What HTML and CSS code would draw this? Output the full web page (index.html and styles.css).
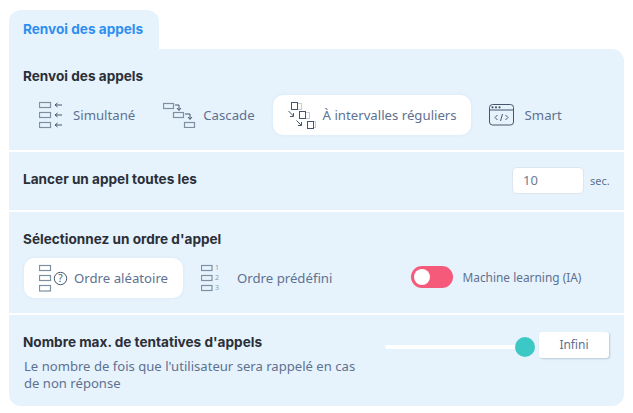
FILE: index.html
```html
<!DOCTYPE html>
<html lang="fr">
<head>
<meta charset="utf-8">
<title>Renvoi des appels</title>
<link rel="stylesheet" href="styles.css">
</head>
<body>
<div class="tab">Renvoi des appels</div>
<main class="panel">
  <section class="sec sec-mode">
    <h2 class="title">Renvoi des appels</h2>
    <div class="opts">
      <div class="opt opt-sim">
        <svg class="ic" width="23" height="28" viewBox="0 0 23 28">
          <g class="box"><rect x=".5" y="1.5" width="11" height="5"/><rect x=".5" y="11.5" width="11" height="5"/><rect x=".5" y="21.5" width="11" height="5"/></g>
          <g class="ln"><path d="M16 4h7M18.5 2 16 4l2.5 2M16 14h7M18.5 12 16 14l2.5 2M16 24h7M18.5 22 16 24l2.5 2"/></g>
        </svg>
        <span>Simultané</span>
      </div>
      <div class="opt opt-cas">
        <svg class="ic" width="33" height="26" viewBox="0 0 33 26">
          <g class="box"><rect x=".5" y="1.5" width="10" height="5"/><rect x="10.5" y="10.5" width="10" height="5"/><rect x="21.5" y="20.5" width="10" height="5"/></g>
          <g class="ln"><path d="M12 3h4v5M14 6l2 2.5L18 6M22 12h5v5M25 15l2 2.5 2-2.5"/></g>
        </svg>
        <span>Cascade</span>
      </div>
      <div class="opt opt-int on">
        <svg class="ic" width="28" height="29" viewBox="0 0 28 29">
          <g class="dot"><rect x="9.500" y="2.500" width="4" height="6"/><rect x="17.500" y="11.500" width="4" height="6"/><rect x="25.500" y="20.500" width="2" height="6"/></g>
          <g class="ln"><rect x="3.500" y="1.500" width="6" height="7"/><rect x="11.500" y="10.500" width="6" height="7"/><rect x="19.500" y="20.500" width="6" height="7"/><path d="M.5 10l5 5M2 15.500h3.500V12M8.500 19.500l5 5M10 24.500h3.500V21"/></g>
        </svg>
        <span class="nowrap">À intervalles réguliers</span>
      </div>
      <div class="opt opt-sma">
        <svg class="ic" width="25" height="22" viewBox="0 0 25 22">
          <rect class="ln" x=".5" y=".5" width="24" height="20.500" rx="3"/>
          <path class="ln" d="M.5 6h24"/>
          <g class="fill"><circle cx="3.500" cy="3.300" r="1.100"/><circle cx="7" cy="3.300" r="1.100"/><circle cx="10.500" cy="3.300" r="1.100"/></g>
          <path class="ln" d="M8.500 11l-2.500 2.500 2.500 2.500M16.500 11l2.500 2.500-2.500 2.500M13.500 10l-2 7"/>
        </svg>
        <span>Smart</span>
      </div>
    </div>
  </section>
  <section class="sec sec-delay">
    <h2 class="title">Lancer un appel toutes les</h2>
    <div class="delay">
      <div class="input">10</div>
      <span class="unit">sec.</span>
    </div>
  </section>
  <section class="sec sec-order">
    <h2 class="title">Sélectionnez un ordre d'appel</h2>
    <div class="order-row">
      <div class="opt opt-rand on">
        <svg class="ic" width="29" height="28" viewBox="0 0 29 28">
          <g class="box"><rect x=".5" y="1.500" width="11" height="5"/><rect x=".5" y="11.500" width="11" height="5"/><rect x=".5" y="21.500" width="11" height="5.500"/></g>
          <circle class="ln" cx="21.500" cy="14.500" r="6.200"/>
          <text class="q" x="21.500" y="18">?</text>
        </svg>
        <span>Ordre aléatoire</span>
      </div>
      <div class="opt opt-pre">
        <svg class="ic" width="19" height="28" viewBox="0 0 19 28">
          <g class="box"><rect x=".5" y="1.500" width="10.500" height="5"/><rect x=".5" y="11.500" width="10.500" height="5"/><rect x=".5" y="21.500" width="10.500" height="5"/></g>
          <g class="num"><text x="14" y="6">1</text><text x="14" y="16">2</text><text x="14" y="26">3</text></g>
        </svg>
        <span>Ordre prédéfini</span>
      </div>
      <div class="ml">
        <div class="toggle"><i class="knob"></i></div>
        <span class="ml-label">Machine learning (IA)</span>
      </div>
    </div>
  </section>
  <section class="sec sec-max">
    <div class="max-text">
      <h2 class="title">Nombre max. de tentatives d'appels</h2>
      <p class="desc">Le nombre de fois que l'utilisateur sera rappelé en cas de non réponse</p>
    </div>
    <div class="max-ctl">
      <div class="slider"><i class="thumb"></i></div>
      <div class="infini">Infini</div>
    </div>
  </section>
</main>
</body>
</html>
```
FILE: styles.css
```css
* { box-sizing: border-box; }
html, body { margin: 0; padding: 0; background: #fff; }
body {
  width: 633px; height: 413px; padding: 10px 9px 0;
  overflow: hidden;
  font-family: "Noto Sans", sans-serif; color: #5e7190; font-size: 13.200px;
}
.nowrap { white-space: nowrap; }
.tab {
  width: 150px; height: 39px; padding: 11px 0 0 14px;
  background: #e6f3fd; border-radius: 12px 12px 0 0;
  font-family: "Inter", sans-serif; font-weight: 700; font-size: 13.600px; line-height: 17px;
  color: #2f8ff0;
}
.panel { width: 615px; border-radius: 0 12px 12px 12px; overflow: hidden; display: flex; flex-direction: column; gap: 2px; }
.sec { background: #e6f3fd; padding: 0 15px; }
.title {
  margin: 0; margin-left: -1px; font-family: "Inter", sans-serif; font-weight: 700; font-size: 13.600px; line-height: 17px;
  color: #2b2f38;
}
.sec-mode { height: 101px; padding-top: 19px; }
.opts { display: flex; margin-top: 10px; height: 40px; }
.opt { display: flex; align-items: center; height: 40px; border-radius: 10px; }
.opt.on { background: #fff; box-shadow: 0 0 3px rgba(160,190,220,.25); }
.ic { flex: none; display: block; }
.box rect { fill: none; stroke: #7f8f9f; stroke-width: 1.200; }
.ln, .ln rect, .ln path { fill: none; stroke: #46556a; stroke-width: 1; }
.dot rect { fill: none; stroke: #8f9ba8; stroke-width: 1; stroke-dasharray: 1 1; }
.fill circle { fill: #46556a; }
.q { font-family: "Noto Sans", sans-serif; font-size: 10px; text-anchor: middle; fill: #46556a; }
.num text { font-family: "Noto Sans", sans-serif; font-size: 7px; fill: #8b9aa9; }
.opt-sim { margin-left: 15px; gap: 11px; }
.opt-cas { margin-left: 28px; gap: 7px; }
.opt-int { margin-left: 18px; padding: 0 15px; gap: 7px; width: 198px; }
.opt-sma { margin-left: 18px; gap: 11px; }
.sec-delay { height: 58px; display: flex; justify-content: space-between; padding-top: 15px; }
.sec-delay .title { margin-top: 4px; }
.delay { display: flex; align-items: center; height: 27px; gap: 6px; }
.input {
  width: 72px; height: 27px; padding: 0 10px; line-height: 25px;
  background: #fff; border: 1px solid #dde6ee; border-radius: 5px; color: #6b7c93; font-size: 13px;
}
.unit { font-size: 11px; width: 19px; white-space: nowrap; }
.sec-order { height: 101px; padding-top: 19px; }
.order-row { display: flex; margin-top: 10px; align-items: center; }
.opt-rand { width: 159px; padding-left: 15px; gap: 6px; }
.opt-pre { margin-left: 18px; gap: 17px; }
.ml { display: flex; align-items: center; margin-left: 79px; gap: 9px; margin-top: -2px; }
.toggle { width: 42px; height: 22px; border-radius: 11px; background: #f65a7b; padding: 3px; }
.knob { display: block; width: 16px; height: 16px; border-radius: 50%; background: #fff; }
.ml-label { font-size: 11.900px; }
.sec-max { height: 91px; display: flex; padding-top: 19px; justify-content: space-between; }
.max-text { width: 340px; }
.desc { margin: 7px 0 0; font-size: 13.100px; line-height: 17px; }
.max-ctl { display: flex; align-items: center; height: 26px; margin-top: -2px; }
.slider { width: 140px; height: 4px; margin-top: 4px; border-radius: 2px; background: #fff; position: relative; }
.thumb { position: absolute; right: -10px; top: -8px; width: 20px; height: 20px; border-radius: 50%; background: #3cc9c6; }
.infini {
  width: 70px; height: 26px; margin-left: 14px; line-height: 26px; text-align: center;
  background: #fff; border-radius: 3px; box-shadow: 1px 1px 2px rgba(100,120,140,.35); font-size: 12px;
}
```
